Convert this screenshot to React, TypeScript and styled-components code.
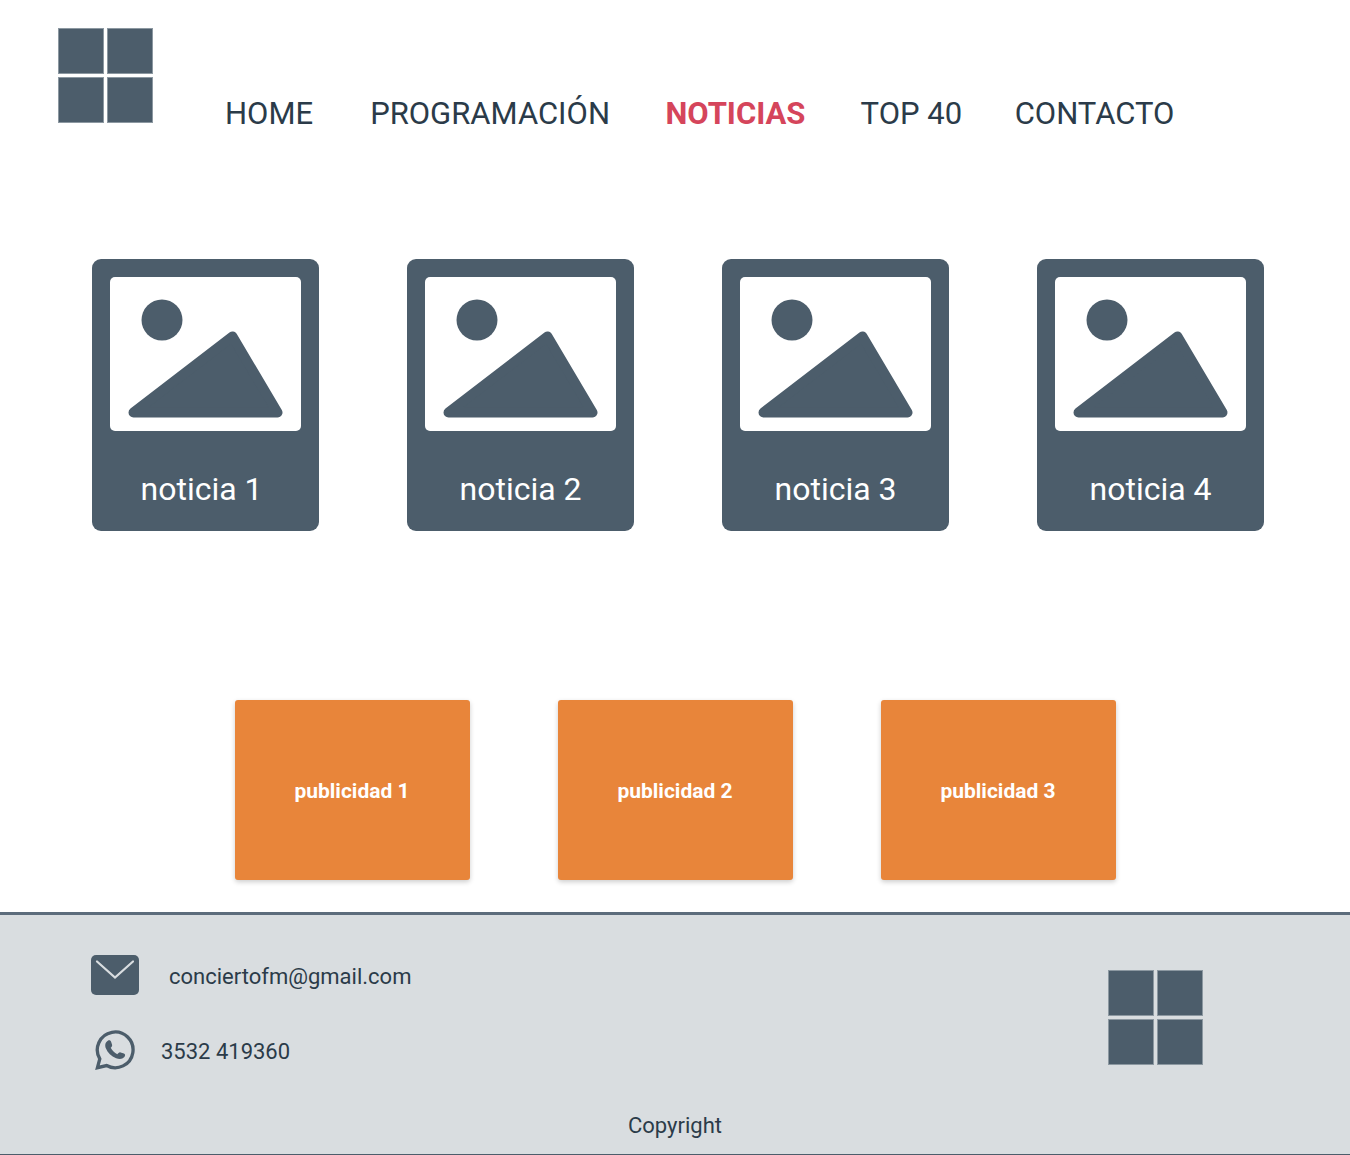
import React from "react";
import styled, { createGlobalStyle } from "styled-components";

const slate = "#4c5d6b";
const ink = "#2b3b49";

const GlobalStyle = createGlobalStyle`
  *, *::before, *::after { box-sizing: border-box; }
  body {
    margin: 0;
    background: #fff;
    color: ${ink};
    font-family: Roboto, "Liberation Sans", sans-serif;
  }
  a { color: inherit; text-decoration: none; }
`;

const Header = styled.header`
  display: flex;
  align-items: flex-start;
  padding: 28px 0 0 58px;
`;

const LogoGrid = styled.div`
  display: grid;
  grid-template-columns: 46px 46px;
  grid-auto-rows: 46px;
  gap: 3px;
  flex: none;
`;

const LogoTile = styled.span`
  background: ${slate};
  border: 1px solid #8c98a1;
`;

const Nav = styled.nav`
  flex: 1;
  display: grid;
  grid-template-columns: 145fr 295fr 195fr 154fr 335fr;
  margin-left: 72px;
  padding-top: 66px;
`;

const NavLink = styled.a<{ $active?: boolean }>`
  font-size: 31px;
  line-height: 40px;
  font-weight: ${(p) => (p.$active ? 700 : 400)};
  color: ${(p) => (p.$active ? "#d5455b" : ink)};
  white-space: nowrap;
`;

const NewsList = styled.section`
  display: flex;
  justify-content: space-between;
  padding: 125px 86px 0 92px;
`;

const NewsCard = styled.article`
  width: 227px;
  padding: 18px 18px 20px;
  border-radius: 9px;
  background: ${slate};
`;

const Picture = styled.svg`
  display: block;
  width: 100%;
`;

const NewsTitle = styled.h2`
  margin: 36px 0 0;
  font-size: 32px;
  line-height: 44px;
  font-weight: 400;
  text-align: center;
  white-space: pre;
  color: #fff;
`;

const AdList = styled.section`
  display: flex;
  justify-content: center;
  gap: 88px;
  padding: 169px 0 32px;
`;

const Ad = styled.a`
  display: flex;
  align-items: center;
  justify-content: center;
  width: 235px;
  height: 180px;
  padding-top: 2px;
  border-radius: 3px;
  background: #e8853a;
  box-shadow: 0 2px 5px rgba(0, 0, 0, 0.2);
  font-size: 21px;
  line-height: 28px;
  font-weight: 700;
  && { color: #fff; }
`;

const Footer = styled.footer`
  border-top: 3px solid #5c6c7c;
  border-bottom: 1px solid ${slate};
  background: #d9dde0;
  font-size: 22px;
  line-height: 28px;
`;

const FooterTop = styled.div`
  display: flex;
  justify-content: space-between;
  padding: 40px 147px 0 91px;
`;

const Contacts = styled.address`
  display: flex;
  flex-direction: column;
  gap: 35px;
  font-style: normal;
`;

const Contact = styled.a<{ $gap: number; $inset?: number }>`
  display: flex;
  align-items: center;
  gap: ${(p) => p.$gap}px;
  padding-left: ${(p) => p.$inset || 0}px;
`;

const ContactText = styled.span`
  padding-top: 3px;
`;

const FooterLogo = styled.div`
  padding-top: 15px;
`;

const Copyright = styled.p`
  margin: 0;
  padding: 42px 0 14px;
  text-align: center;
`;

function Logo() {
  return (
    <LogoGrid>
      <LogoTile />
      <LogoTile />
      <LogoTile />
      <LogoTile />
    </LogoGrid>
  );
}

function Landscape() {
  return (
    <Picture viewBox="0 0 191 154" aria-hidden="true">
      <rect width="191" height="154" rx="5" fill="#fff" />
      <circle cx="52" cy="43" r="20.5" fill={slate} />
      <path
        d="M122.5 59.5 L167.5 135.5 H23.5 Z"
        fill={slate}
        stroke={slate}
        strokeWidth="10"
        strokeLinejoin="round"
      />
    </Picture>
  );
}

function MailIcon() {
  return (
    <svg width="48" height="40" viewBox="0 0 48 40" aria-hidden="true">
      <rect width="48" height="40" rx="5" fill={slate} />
      <path d="M6 6.5 L24 22.5 L42 6.5" fill="none" stroke="#d9dde0" strokeWidth="2.2" strokeLinecap="round" />
    </svg>
  );
}

function WhatsAppIcon() {
  return (
    <svg width="40" height="40" viewBox="0 0 40 41" aria-hidden="true">
      <path
        d="M2 38.6 L4.4 29.6 A18.3 18.3 0 1 1 11.4 36.4 Z"
        fill="none"
        stroke={slate}
        strokeWidth="3.4"
        strokeLinejoin="miter"
      />
      <path
        d="M12.6 11 C14.2 10.2 15.6 10.7 16.1 12.2 L17 15 C17.4 16.4 16.3 17.2 15.6 18.2 C17.2 21.2 19.4 23.4 22.4 24.8 C23.4 23.9 24.2 22.6 25.7 23 L29.2 24.2 C30.9 24.9 30.5 26.7 29.6 27.8 C27.5 30.2 24 30.1 21.1 28.9 C16.2 26.9 12.5 23.2 10.6 18.7 C9.5 15.8 9.9 12.6 12.6 11 Z"
        fill={slate}
      />
    </svg>
  );
}

const links = ["HOME", "PROGRAMACIÓN", "NOTICIAS", "TOP 40", "CONTACTO"];
const news = ["noticia 1 ", "noticia 2", "noticia 3", "noticia 4"];

export default function App() {
  return (
    <>
      <GlobalStyle />
      <Header>
        <Logo />
        <Nav>
          {links.map((label) => (
            <NavLink key={label} href="#" $active={label === "NOTICIAS"}>
              {label}
            </NavLink>
          ))}
        </Nav>
      </Header>
      <main>
        <NewsList>
          {news.map((title) => (
            <NewsCard key={title}>
              <Landscape />
              <NewsTitle>{title}</NewsTitle>
            </NewsCard>
          ))}
        </NewsList>
        <AdList>
          {[1, 2, 3].map((n) => (
            <Ad key={n} href="#">
              publicidad {n}
            </Ad>
          ))}
        </AdList>
      </main>
      <Footer>
        <FooterTop>
          <Contacts>
            <Contact href="mailto:conciertofm@gmail.com" $gap={30}>
              <MailIcon />
              <ContactText>conciertofm@gmail.com</ContactText>
            </Contact>
            <Contact href="tel:3532419360" $gap={26} $inset={4}>
              <WhatsAppIcon />
              <ContactText>3532 419360</ContactText>
            </Contact>
          </Contacts>
          <FooterLogo>
            <Logo />
          </FooterLogo>
        </FooterTop>
        <Copyright>Copyright</Copyright>
      </Footer>
    </>
  );
}
